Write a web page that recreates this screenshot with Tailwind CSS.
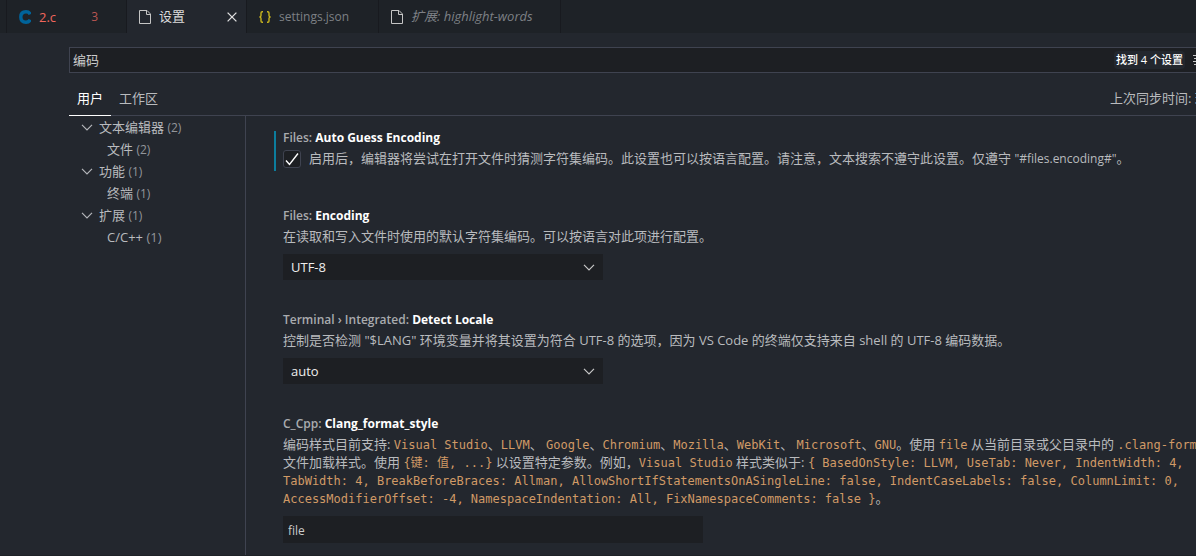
<!DOCTYPE html>
<html lang="zh-CN">
<head>
<meta charset="utf-8">
<title>设置</title>
<script src="https://cdn.jsdelivr.net/npm/@tailwindcss/browser@4"></script>
</head>
<body class="h-screen overflow-hidden bg-[#23272e] font-['Open_Sans','Noto_Sans_CJK_SC',sans-serif] text-[13px] leading-[18px] text-[#b9bbbe]">
<div class="flex h-full flex-col border-b border-[#1e2227]">
  <nav class="flex h-[33px] shrink-0 bg-[#1e2227] pl-1.5 text-[#7d8085]" aria-label="编辑器">
    <div class="flex w-[121px] items-center border-x border-[#181a1f] pl-3">
      <svg class="h-[14px] w-3 shrink-0" viewBox="0 0 12 14" fill="none" stroke="#00639a" stroke-width="3.4"><path d="M11.2 4.3C10.5 2.6 9 1.8 7 1.8 3.700 1.800 1.800 3.900 1.800 7s1.900 5.200 5.200 5.200c2 0 3.500-.8 4.200-2.500"/></svg>
      <a href="#" class="ml-2 text-[#f0665c]">2.c</a>
      <span class="ml-auto mr-7 text-xs text-[#b85552]">3</span>
    </div>
    <div class="flex w-[119px] items-center bg-[#23272e] pl-3">
      <svg class="h-[14px] w-3 shrink-0" viewBox="0 0 12 14" fill="none" stroke="#c5c5c5"><path d="M.5.5H8L11.500 4v9.500H.5zM7.500.5v4h4"/></svg>
      <a href="#" class="ml-2 pb-px text-[#dcdcdc]">设置</a>
      <button type="button" class="ml-auto mr-[9px]" aria-label="关闭"><svg class="size-[10px]" viewBox="0 0 10 10" stroke="#e0e0e0" stroke-width="1.300"><path d="M.6.6l8.800 8.800M9.400.6L.6 9.400"/></svg></button>
    </div>
    <div class="flex w-[133px] items-center border-x border-[#181a1f] pl-3">
      <svg class="h-3 w-3 shrink-0" viewBox="0 0 12 12" fill="none" stroke="#c9b51f" stroke-width="1.400"><path d="M4 .7H3.200Q2 .7 2 2v2.500Q2 6 .4 6 2 6 2 7.500V10q0 1.300 1.200 1.300H4M8 .7h.8Q10 .7 10 2v2.500Q10 6 11.600 6 10 6 10 7.500V10q0 1.300-1.200 1.300H8"/></svg>
      <a href="#" class="ml-2 text-xs">settings.json</a>
    </div>
    <div class="flex w-[182px] items-center border-r border-[#181a1f] pl-3">
      <svg class="h-[14px] w-3 shrink-0" viewBox="0 0 12 14" fill="none" stroke="#c5c5c5"><path d="M.5.5H8L11.500 4v9.500H.5zM7.500.5v4h4"/></svg>
      <a href="#" class="ml-2 whitespace-nowrap pb-px italic">扩展: highlight-words</a>
    </div>
  </nav>

  <div class="ml-[69px] mt-3.5 flex h-[26px] shrink-0 items-center border-y border-l border-[#3f4350] bg-[#1d1f23]">
    <input type="text" value="编码" aria-label="搜索设置" class="h-full min-w-0 flex-1 bg-transparent pb-0.5 pl-[3px] text-[#cccccc] outline-none">
    <span class="mr-2 rounded-sm bg-[#23272e] px-0.5 text-[11px] font-medium text-white">找到 4 个设置</span>
    <button type="button" class="w-[3px] overflow-hidden" aria-label="筛选"><svg class="h-3 w-3" viewBox="0 0 12 12" stroke="#c5c5c5"><path d="M0 1.500h12M1 4.500h10M0 7.500h12M1 10.500h10"/></svg></button>
  </div>

  <header class="ml-[69px] mt-[9px] flex h-[34px] shrink-0 justify-between border-b border-[#3f4350]">
    <div class="flex gap-2" role="tablist">
      <button type="button" role="tab" aria-selected="true" class="-mb-px border-b border-white px-2 pb-px text-white">用户</button>
      <button type="button" role="tab" aria-selected="false" class="pb-px">工作区</button>
    </div>
    <div class="flex w-[86px] items-center overflow-hidden whitespace-nowrap pb-px">上次同步时间: 现在</div>
  </header>

  <div class="flex min-h-0 flex-1">
    <aside class="ml-[69px] w-[177px] shrink-0 border-r border-[#3f4350] pl-3">
      <ul class="leading-[22px]">
        <li><div class="flex items-center gap-1.5"><svg class="h-[7px] w-3" viewBox="0 0 12 7" fill="none" stroke="#b4b6ba" stroke-width="1.200"><path d="M1 .8l5 5 5-5"/></svg><span>文本编辑器 <span class="text-xs text-[#92959a]">(2)</span></span></div>
          <ul class="pl-[26px]"><li>文件 <span class="text-xs text-[#92959a]">(2)</span></li></ul></li>
        <li><div class="flex items-center gap-1.5"><svg class="h-[7px] w-3" viewBox="0 0 12 7" fill="none" stroke="#b4b6ba" stroke-width="1.200"><path d="M1 .8l5 5 5-5"/></svg><span>功能 <span class="text-xs text-[#92959a]">(1)</span></span></div>
          <ul class="pl-[26px]"><li>终端 <span class="text-xs text-[#92959a]">(1)</span></li></ul></li>
        <li><div class="flex items-center gap-1.5"><svg class="h-[7px] w-3" viewBox="0 0 12 7" fill="none" stroke="#b4b6ba" stroke-width="1.200"><path d="M1 .8l5 5 5-5"/></svg><span>扩展 <span class="text-xs text-[#92959a]">(1)</span></span></div>
          <ul class="pl-[26px]"><li>C/C++ <span class="text-[#92959a]">(1)</span></li></ul></li>
      </ul>
    </aside>

    <main class="min-w-0 flex-1 overflow-hidden whitespace-nowrap pl-7 pt-px">
      <section class="flex gap-[7px] pb-[27px]">
        <div class="-mb-[3px] mt-3.5 w-0.5 bg-[#0c7d9d]"></div>
        <div class="pt-3">
          <h2 class="text-xs leading-[18px] font-semibold text-[#a9abae]">Files: <span class="font-bold text-white">Auto Guess Encoding</span></h2>
          <label class="mt-[3px] flex h-[18px] items-start gap-2">
            <input type="checkbox" checked class="peer sr-only">
            <span class="flex size-[18px] items-center justify-center rounded-[3px] border border-[#3f4350] bg-[#1d1f23]"><svg class="size-[14px]" viewBox="0 0 14 14" fill="none" stroke="#fff" stroke-width="1.400"><path d="M1 8.500l3.500 4L13 1.500"/></svg></span>
            <span class="leading-4">启用后，编辑器将尝试在打开文件时猜测字符集编码。此设置也可以按语言配置。请注意，文本搜索不遵守此设置。仅遵守 <span class="text-xs">"#files.encoding#"</span>。</span>
          </label>
        </div>
      </section>

      <section class="pb-[19px] pl-[9px] pt-3">
        <h2 class="text-xs leading-[18px] font-semibold text-[#a9abae]">Files: <span class="font-bold text-white">Encoding</span></h2>
        <p class="mt-0.5 h-[18px]"><label for="enc">在读取和写入文件时使用的默认字符集编码。可以按语言对此项进行配置。</label></p>
        <div class="mt-[9px] grid w-80 items-center">
          <select id="enc" class="col-start-1 row-start-1 h-[26px] appearance-none bg-[#1d1f23] pl-2 text-[#eeeeee]"><option>UTF-8</option></select>
          <svg class="pointer-events-none col-start-1 row-start-1 mr-2 h-[7px] w-3 justify-self-end" viewBox="0 0 12 7" fill="none" stroke="#c8c8c8" stroke-width="1.200"><path d="M1 .8l5 5 5-5"/></svg>
        </div>
      </section>

      <section class="pb-[19px] pl-[9px] pt-3">
        <h2 class="text-xs leading-[18px] font-semibold text-[#a9abae]">Terminal › Integrated: <span class="font-bold text-white">Detect Locale</span></h2>
        <p class="mt-0.5 h-[18px]"><label for="loc">控制是否检测 "$LANG" 环境变量并将其设置为符合 UTF-8 的选项，因为 VS Code 的终端仅支持来自 shell 的 UTF-8 编码数据。</label></p>
        <div class="mt-[9px] grid w-80 items-center">
          <select id="loc" class="col-start-1 row-start-1 h-[26px] appearance-none bg-[#1d1f23] pl-2 text-[#eeeeee]"><option>auto</option></select>
          <svg class="pointer-events-none col-start-1 row-start-1 mr-2 h-[7px] w-3 justify-self-end" viewBox="0 0 12 7" fill="none" stroke="#c8c8c8" stroke-width="1.200"><path d="M1 .8l5 5 5-5"/></svg>
        </div>
      </section>

      <section class="pl-[9px] pt-3 [&_code]:font-['DejaVu_Sans_Mono','Noto_Sans_CJK_SC',monospace] [&_code]:text-xs [&_code]:text-[#d19a66]">
        <h2 class="text-xs leading-[18px] font-semibold text-[#a9abae]">C_Cpp: <span class="font-bold text-white">Clang_format_style</span></h2>
        <p class="mt-0.5 [&>span]:block [&>span]:h-[18px]">
          <span>编码样式目前支持: <code>Visual Studio</code>、<code>LLVM</code>、 <code>Google</code>、<code>Chromium</code>、<code>Mozilla</code>、<code>WebKit</code>、 <code>Microsoft</code>、<code>GNU</code>。使用 <code>file</code> 从当前目录或父目录中的 <code>.clang-format</code></span>
          <span>文件加载样式。使用 <code>{键: 值, ...}</code> 以设置特定参数。例如，<code>Visual Studio</code> 样式类似于: <code>{ BasedOnStyle: LLVM, UseTab: Never, IndentWidth: 4,</code></span>
          <span><code>TabWidth: 4, BreakBeforeBraces: Allman, AllowShortIfStatementsOnASingleLine: false, IndentCaseLabels: false, ColumnLimit: 0,</code></span>
          <span><code>AccessModifierOffset: -4, NamespaceIndentation: All, FixNamespaceComments: false }</code>。</span>
        </p>
        <input type="text" value="file" aria-label="Clang_format_style" class="mt-[9px] block h-[27px] w-[420px] bg-[#1d1f23] pl-[5px] pt-0.5 text-xs text-[#cccccc] outline-none">
      </section>
    </main>
  </div>
</div>
</body>
</html>
